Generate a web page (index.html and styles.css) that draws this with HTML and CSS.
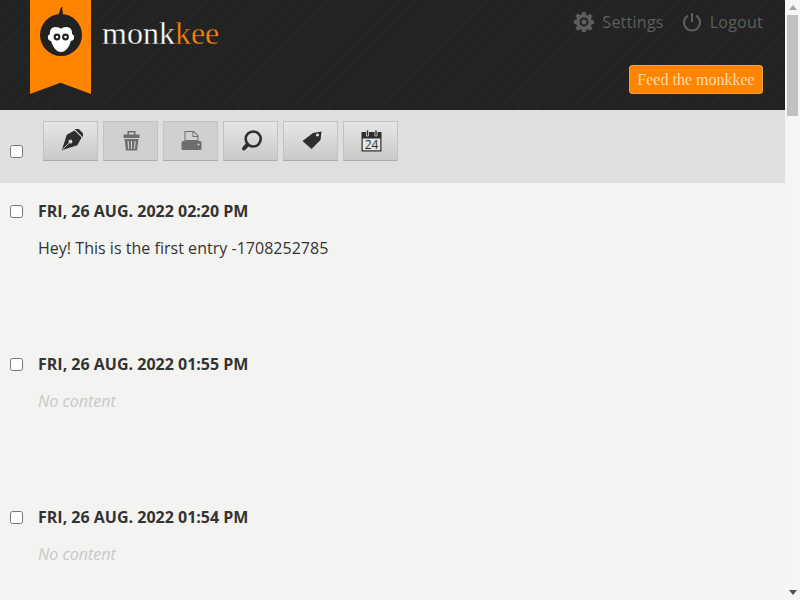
FILE: index.html
```html
<!DOCTYPE html>
<html lang="en">
<head>
  <meta charset="UTF-8" />
  <meta name="viewport" content="width=device-width, initial-scale=1.0"/>
  <title>monkkee</title>
  <link rel="stylesheet" href="styles.css">
</head>
<body>

  <div class="pagina">
    <header class="topo">
      <a class="marca" href="#">
        <div class="fita">
          <svg class="macaco" viewBox="0 0 44 56" width="44" height="56">
            <path d="M18 15c1.500-2 3-4 3-6 0-1.500 1-3 3-3-1 1-1 2-.5 3.500.5 2 .5 4 0 6z" fill="#222"/>
            <circle cx="22" cy="34" r="21" fill="#222"/>
            <path d="M16.500 26c2.500 0 4 .8 5.500 1.800 1.500-1 3-1.800 5.500-1.800 4 0 6 3 5.500 7 1.800.8 2.500 2.500 2 4.500-.5 1.500-1.700 2.500-3.200 2.500-1.500 6-5 11-9.800 11s-8.300-5-9.800-11c-1.500 0-2.700-1-3.200-2.500-.5-2 .2-3.700 2-4.500-.5-4 1.500-7 5.500-7z" fill="#fff"/>
            <circle cx="18" cy="36" r="3.400" fill="#222"/>
            <circle cx="26.500" cy="36" r="3.400" fill="#222"/>
            <circle cx="18" cy="36" r="1.300" fill="#fff"/>
            <circle cx="26.500" cy="36" r="1.300" fill="#fff"/>
          </svg>
        </div>
        <span class="nome">monk<em>kee</em></span>
      </a>
      <div class="topo-direita">
        <nav class="menu">
          <a href="#">
            <svg viewBox="0 0 20 20" width="20" height="20">
              <path fill-rule="evenodd" d="M8.300 0h3.400l.5 2.700 1.600.7 2.300-1.600 2.400 2.400-1.600 2.300.7 1.600 2.400.5v3.400l-2.400.5-.7 1.600 1.600 2.300-2.400 2.400-2.300-1.600-1.600.7-.5 2.400H8.300l-.5-2.400-1.600-.7-2.300 1.600-2.400-2.400 1.600-2.300-.7-1.600L0 11.700V8.300l2.400-.5.7-1.600-1.600-2.300 2.400-2.400 2.300 1.600 1.600-.7zM10 5.500a4.500 4.500 0 1 0 0 9 4.500 4.500 0 0 0 0-9z" fill="#5e5e5e"/>
              <circle cx="10" cy="10" r="2.500" fill="#5e5e5e"/>
            </svg>
            Settings
          </a>
          <a href="#">
            <svg viewBox="0 0 20 20" width="20" height="20">
              <path d="M6 3.500a8 8 0 1 0 8 0M10 1v9" fill="none" stroke="#5e5e5e" stroke-width="2"/>
            </svg>
            Logout
          </a>
        </nav>
        <a class="btn-feed" href="#">Feed the monkkee</a>
      </div>
    </header>

    <section class="barra">
      <input type="checkbox" class="marcar-todos">
      <div class="botoes">
        <button class="btn">
          <svg viewBox="0 0 24 24" width="24" height="24">
            <g transform="rotate(45 12 12)">
              <path d="M6.500 -2h11v3h-11z" fill="#2e2e2e"/>
              <path fill-rule="evenodd" d="M7 2h10l2.500 8.500L12 25 4.500 10.500zM12 10.800a2 2 0 1 0 .01 0z" fill="#2e2e2e"/>
              <path d="M12 14v10" stroke="#d8d8d6" stroke-width=".8"/>
            </g>
          </svg>
        </button>
        <button class="btn inativo">
          <svg viewBox="0 0 24 24" width="24" height="24">
            <path fill-rule="evenodd" d="M8.500 2h8v3.500h4v3.500h-16V5.500h4zM10 3.500v2h5v-2zM5.500 10h14l-1.500 11.500H7zM8.500 12l.7 8h1l-.5-8zM12 12v8h1v-8zM15.500 12l-.5 8h1l.7-8z" fill="#6e6e6e"/>
          </svg>
        </button>
        <button class="btn inativo">
          <svg viewBox="0 0 24 24" width="24" height="24">
            <path fill-rule="evenodd" d="M5.500 2h9.500l4.500 4.500V12h-14zM14.500 3v4h4zM6.500 3v8h12V8h-5V3z" fill="#6e6e6e"/>
            <path fill-rule="evenodd" d="M4 12h17q1.500 0 1.500 1.500V20q0 1-1.500 1H4q-1.500 0-1.500-1v-6.500Q2.500 12 4 12zM19.500 14.500a1 1 0 1 0 .01 0z" fill="#6e6e6e"/>
          </svg>
        </button>
        <button class="btn">
          <svg viewBox="0 0 24 24" width="24" height="24">
            <circle cx="14.200" cy="10" r="7.500" fill="none" stroke="#2e2e2e" stroke-width="2.600"/>
            <path d="M8.500 15.700L5 19.500" stroke="#2e2e2e" stroke-width="4" stroke-linecap="round"/>
          </svg>
        </button>
        <button class="btn">
          <svg viewBox="0 0 24 24" width="24" height="24">
            <path fill-rule="evenodd" d="M3.500 12L14 4l8.500-1.500-1 8.500-9 9zM18.500 4.400a1.600 1.600 0 1 0 .01 0z" fill="#2e2e2e"/>
          </svg>
        </button>
        <button class="btn">
          <svg viewBox="0 0 24 24" width="24" height="24">
            <path d="M2.500 3h20v19.500h-20z" fill="#2e2e2e"/>
            <path d="M3.700 9.500h17.600v11.800H3.700z" fill="#e4e4e2"/>
            <path d="M8.500 2v4M17 2v4" stroke="#dcdcda" stroke-width="3" stroke-linecap="round"/>
            <path d="M8.500 2v4M17 2v4" stroke="#2e2e2e" stroke-width="1.400" stroke-linecap="round"/>
            <text x="12.500" y="20" class="dia">24</text>
          </svg>
        </button>
      </div>
    </section>

    <main class="lista">
      <article class="entrada">
        <input type="checkbox">
        <div>
          <h2>Fri, 26 Aug. 2022 02:20 PM</h2>
          <p>Hey! This is the first entry -1708252785</p>
        </div>
      </article>
      <article class="entrada">
        <input type="checkbox">
        <div>
          <h2>Fri, 26 Aug. 2022 01:55 PM</h2>
          <p class="vazio">No content</p>
        </div>
      </article>
      <article class="entrada">
        <input type="checkbox">
        <div>
          <h2>Fri, 26 Aug. 2022 01:54 PM</h2>
          <p class="vazio">No content</p>
        </div>
      </article>
    </main>
  </div>

  <div class="rolagem">
    <span class="seta-cima"></span>
    <div class="trilho"><div class="polegar"></div></div>
    <span class="seta-baixo"></span>
  </div>

</body>
</html>
```

FILE: styles.css
```css
body {
  margin: 0;
  height: 600px;
  overflow: hidden;
  display: flex;
  font-family: 'Open Sans', sans-serif;
  font-size: 16px;
  color: #333;
  background-color: #f3f3f1;
}

a {
  text-decoration: none;
}

.pagina {
  flex: 1;
  min-width: 0;
}

/* topo */
.topo {
  height: 110px;
  padding: 0 22px 0 30px;
  display: flex;
  justify-content: space-between;
  background-color: #232323;
  background-image: repeating-linear-gradient(135deg, #282828 0, #282828 1px, #212121 1px, #212121 3px);
}

.marca {
  display: flex;
  align-items: flex-start;
  gap: 11px;
}

.fita {
  width: 61px;
  height: 94px;
  display: flex;
  justify-content: center;
  background: #ff8400;
  clip-path: polygon(0 0, 100% 0, 100% 100%, 50% 88%, 0 100%);
}

.macaco {
  margin-top: 1px;
}

.nome {
  margin-top: 12px;
  font-family: 'Liberation Serif', serif;
  font-size: 32px;
  line-height: 42px;
  color: #fff;
  -webkit-text-stroke: 0.35px #232323;
}

.nome em {
  font-style: normal;
  color: #ff8400;
}

.topo-direita {
  display: flex;
  flex-direction: column;
  align-items: flex-end;
}

.menu {
  display: flex;
  gap: 18px;
  margin-top: 10px;
}

.menu a {
  display: flex;
  align-items: center;
  gap: 8px;
  color: #5e5e5e;
  line-height: 24px;
  letter-spacing: 0.25px;
}

.btn-feed {
  margin-top: 31px;
  width: 134px;
  height: 29px;
  box-sizing: border-box;
  border: 1px solid #e8a04c;
  border-radius: 3px;
  background: #ff8400;
  color: #ffe9cc;
  font-family: 'Liberation Serif', serif;
  font-size: 16px;
  line-height: 27px;
  text-align: center;
  -webkit-text-stroke: 0.2px #ff8400;
}

/* barra de botoes */
.barra {
  height: 73px;
  display: flex;
  padding-left: 10px;
  background: #dfdfdd;
}

.marcar-todos {
  margin: 35px 0 0;
  width: 13px;
  height: 13px;
}

.botoes {
  display: flex;
  gap: 5px;
  margin: 11px 0 0 20px;
}

.btn {
  width: 55px;
  height: 40px;
  padding: 0;
  display: flex;
  align-items: center;
  justify-content: center;
  border: 1px solid #c2c2c0;
  border-bottom-color: #acacaa;
  background: linear-gradient(#e6e6e4, #cacac8);
}

.btn.inativo {
  background: #d0d0ce;
}

.dia {
  font-family: 'Open Sans', sans-serif;
  font-size: 12px;
  text-anchor: middle;
  fill: #2e2e2e;
}

/* entradas */
.lista {
  padding: 18px 0 0 10px;
  display: flex;
  flex-direction: column;
  gap: 95px;
}

.entrada {
  display: flex;
  gap: 15px;
}

.entrada input {
  margin: 4px 0 0;
  width: 13px;
  height: 13px;
}

.entrada h2 {
  margin: 0;
  font-size: 16px;
  line-height: 20px;
  font-weight: 700;
  text-transform: uppercase;
}

.entrada p {
  margin: 16px 0 0;
  line-height: 22px;
  letter-spacing: 0.025px;
}

.vazio {
  font-style: italic;
  color: #c8c8c8;
}

/* barra de rolagem desenhada */
.rolagem {
  width: 15px;
  display: flex;
  flex-direction: column;
  align-items: center;
  background: #f5f5f5;
}

.seta-cima,
.seta-baixo {
  width: 0;
  height: 0;
  margin: 5px 0;
  border-left: 4px solid transparent;
  border-right: 4px solid transparent;
}

.seta-cima {
  border-bottom: 5px solid #a3a3a3;
}

.seta-baixo {
  border-top: 5px solid #505050;
}

.trilho {
  flex: 1;
  width: 11px;
}

.polegar {
  height: 101px;
  background: #c1c1c1;
}
```
